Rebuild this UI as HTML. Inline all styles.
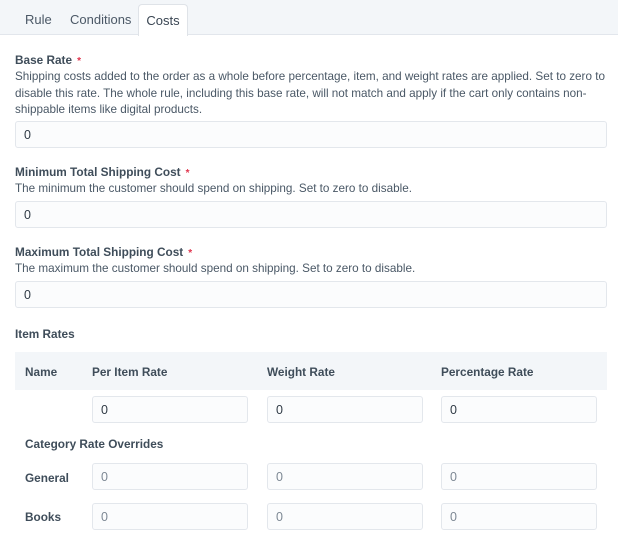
<!DOCTYPE html>
<html><head><style>
*{box-sizing:border-box;margin:0;padding:0}
body{width:618px;height:546px;background:#fff;font-family:"Liberation Sans",sans-serif;color:#3f4d5a;position:relative;overflow:hidden;font-size:12.5px}
.tabs{position:absolute;left:0;top:0;width:618px;height:35px;background:#f3f6f9;border-bottom:1px solid #e2e6ec}
.tab{position:absolute;top:12px;font-size:13px;color:#4b5866}
.active{position:absolute;left:138px;top:4px;width:50px;height:32px;background:#fff;border:1px solid #dfe3e8;border-bottom:none;border-radius:4px 4px 0 0;font-size:13px;padding-top:8px;text-align:center;color:#3a4653}
.a{position:absolute}
.lbl{font-weight:bold;font-size:11.8px;color:#3f4d5a}
.lbl .s{color:#e0334c;margin-left:5px;font-size:10px}
.d{font-size:11.7px;line-height:16.5px;color:#4a5866}
.in{position:absolute;height:27px;background:#fbfcfd;border:1px solid #e3e7ec;border-radius:3px;font-size:12.5px;padding:6px 0 0 8px;color:#2f3a45}
.g{color:#7d8894}
</style></head><body>
<div class="tabs">
<div class="tab" style="left:25px">Rule</div>
<div class="tab" style="left:70px">Conditions</div>
<div class="active">Costs</div>
</div>
<div class="a lbl" style="left:15px;top:53px">Base Rate<span class="s">*</span></div>
<div class="a d" style="left:15px;top:69px;width:595px">Shipping costs added to the order as a whole before percentage, item, and weight rates are applied. Set to zero to disable this rate. The whole rule, including this base rate, will not match and apply if the cart only contains non-shippable items like digital products.</div>
<div class="in" style="left:15px;top:121px;width:592px">0</div>
<div class="a lbl" style="left:15px;top:165px">Minimum Total Shipping Cost<span class="s">*</span></div>
<div class="a d" style="left:15px;top:181px">The minimum the customer should spend on shipping. Set to zero to disable.</div>
<div class="in" style="left:15px;top:201px;width:592px">0</div>
<div class="a lbl" style="left:15px;top:245px">Maximum Total Shipping Cost<span class="s">*</span></div>
<div class="a d" style="left:15px;top:261px">The maximum the customer should spend on shipping. Set to zero to disable.</div>
<div class="in" style="left:15px;top:281px;width:592px">0</div>
<div class="a lbl" style="left:15px;top:327px">Item Rates</div>
<div class="a" style="left:15px;top:352px;width:592px;height:38px;background:#f3f6f9"></div>
<div class="a lbl" style="left:25px;top:365px">Name</div>
<div class="a lbl" style="left:92px;top:365px">Per Item Rate</div>
<div class="a lbl" style="left:267px;top:365px">Weight Rate</div>
<div class="a lbl" style="left:441px;top:365px">Percentage Rate</div>
<div class="in" style="left:92px;top:396px;width:156px">0</div>
<div class="in" style="left:267px;top:396px;width:156px">0</div>
<div class="in" style="left:441px;top:396px;width:156px">0</div>
<div class="a lbl" style="left:25px;top:437px">Category Rate Overrides</div>
<div class="a lbl" style="left:25px;top:471px">General</div>
<div class="in g" style="left:92px;top:463px;width:156px">0</div>
<div class="in g" style="left:267px;top:463px;width:156px">0</div>
<div class="in g" style="left:441px;top:463px;width:156px">0</div>
<div class="a lbl" style="left:25px;top:510px">Books</div>
<div class="in g" style="left:92px;top:503px;width:156px">0</div>
<div class="in g" style="left:267px;top:503px;width:156px">0</div>
<div class="in g" style="left:441px;top:503px;width:156px">0</div>
</body></html>
